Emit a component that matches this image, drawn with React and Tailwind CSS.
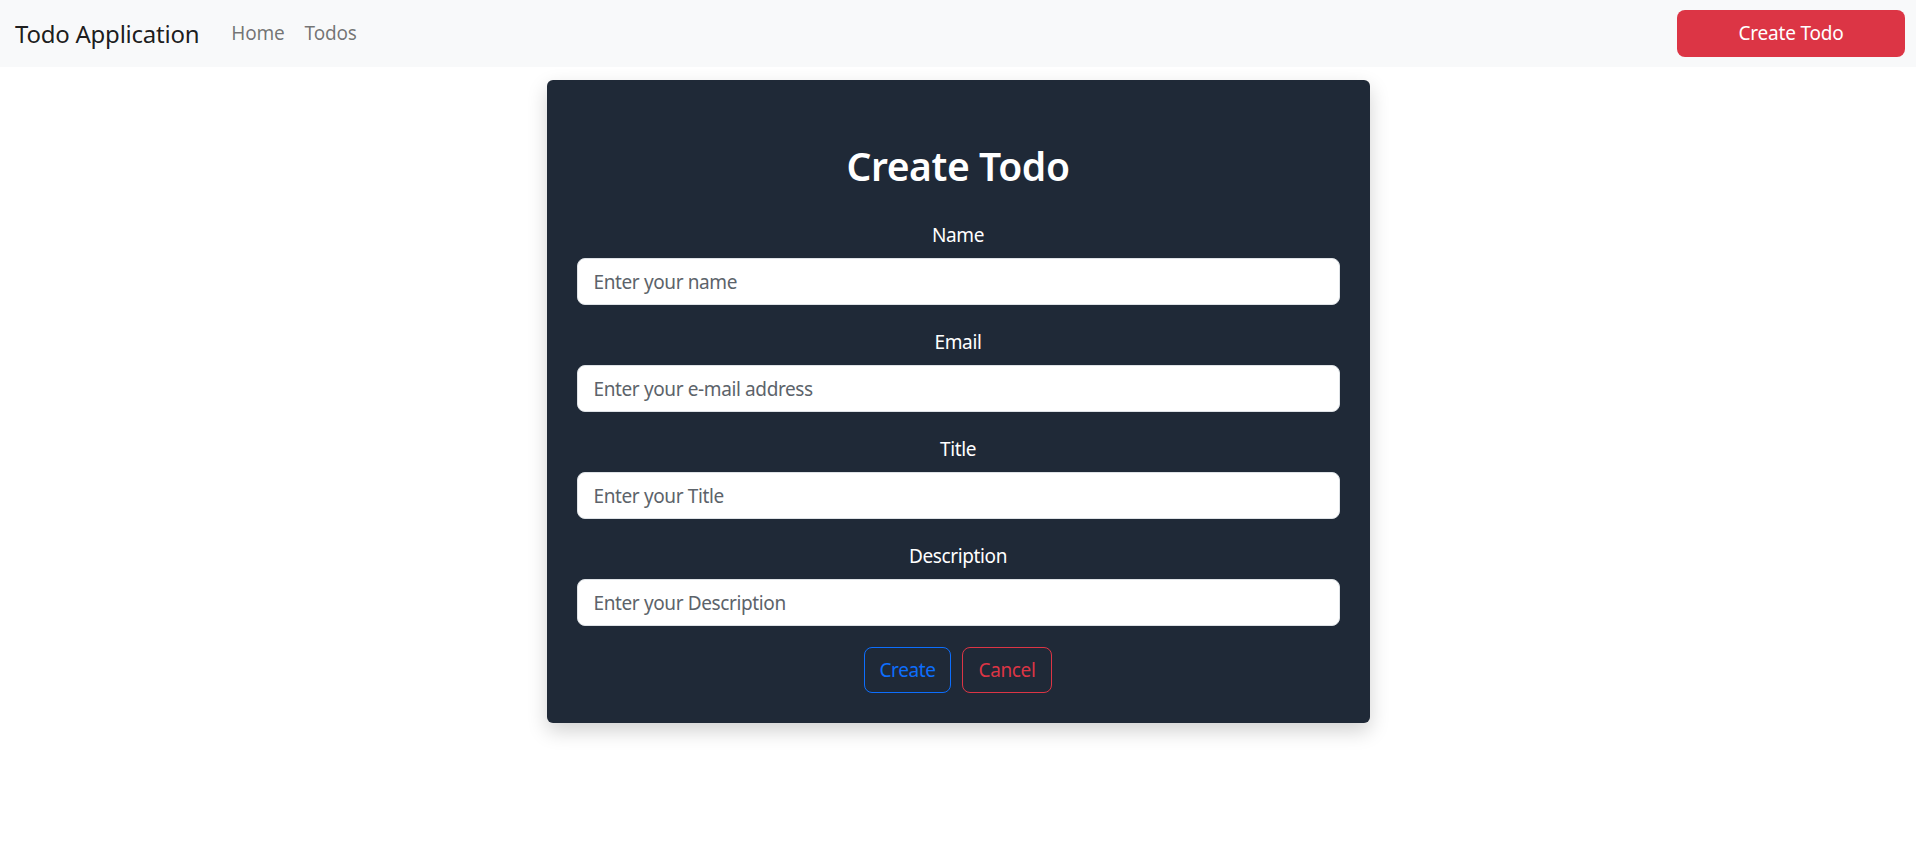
import React, { useState } from 'react';

const fields = [
  { id: 'name', label: 'Name', placeholder: 'Enter your name', type: 'text' },
  { id: 'email', label: 'Email', placeholder: 'Enter your e-mail address', type: 'email' },
  { id: 'title', label: 'Title', placeholder: 'Enter your Title', type: 'text' },
  { id: 'description', label: 'Description', placeholder: 'Enter your Description', type: 'text' },
];

const Navbar = () => (
  <nav className="h-[67px] bg-[#f8f9fa] flex items-center pl-[15px] pr-[11px]">
    <a href="#" className="text-[24px] tracking-[-0.01em] text-black/90 leading-none">Todo Application</a>
    <div className="ml-[32px] flex items-center gap-[20px] text-[19px] tracking-[-0.01em] text-black/55">
      <a href="#">Home</a>
      <a href="#">Todos</a>
    </div>
    <button className="ml-auto w-[228px] h-[47px] rounded-[8px] bg-[#dc3545] text-white text-[19px] tracking-[-0.01em]">
      Create Todo
    </button>
  </nav>
);

const App = () => {
  const [form, setForm] = useState({ name: '', email: '', title: '', description: '' });

  const handleChange = (e) => setForm({ ...form, [e.target.name]: e.target.value });

  return (
    <div className="min-h-screen bg-white font-['Noto_Sans',sans-serif]">
      <Navbar />

      <div className="w-[823px] mx-auto mt-[13px] bg-[#1f2937] rounded-[6px] shadow-[0_8px_20px_rgba(0,0,0,0.18)] p-[30px]">
        <h2 className="mt-[32px] mb-[30px] text-[39px] leading-[48px] font-semibold tracking-[-0.01em] text-white text-center">
          Create Todo
        </h2>

        <form onSubmit={(e) => e.preventDefault()}>
          {fields.map((f, i) => (
            <div key={f.id} className={i < fields.length - 1 ? 'mb-[22px]' : 'mb-[21px]'}>
              <label htmlFor={f.id} className="block text-center text-white text-[19px] tracking-[-0.02em] leading-[30px] mb-[8px]">
                {f.label}
              </label>
              <input
                id={f.id}
                name={f.id}
                type={f.type}
                value={form[f.id]}
                onChange={handleChange}
                placeholder={f.placeholder}
                className="block w-full h-[47px] px-[16px] text-[19px] tracking-[-0.02em] bg-white text-[#212529] border border-[#dee2e6] rounded-[8px] placeholder:text-[#5c636a] focus:outline-none"
              />
            </div>
          ))}

          <div className="flex justify-center gap-[11px]">
            <button
              type="submit"
              className="w-[87px] h-[46px] rounded-[8px] border border-[#0d6efd] text-[#0d6efd] text-[19px] tracking-[-0.02em]"
            >
              Create
            </button>
            <button
              type="button"
              className="w-[90px] h-[46px] rounded-[8px] border border-[#dc3545] text-[#dc3545] text-[19px] tracking-[-0.02em]"
            >
              Cancel
            </button>
          </div>
        </form>
      </div>
    </div>
  );
};

export default App;
